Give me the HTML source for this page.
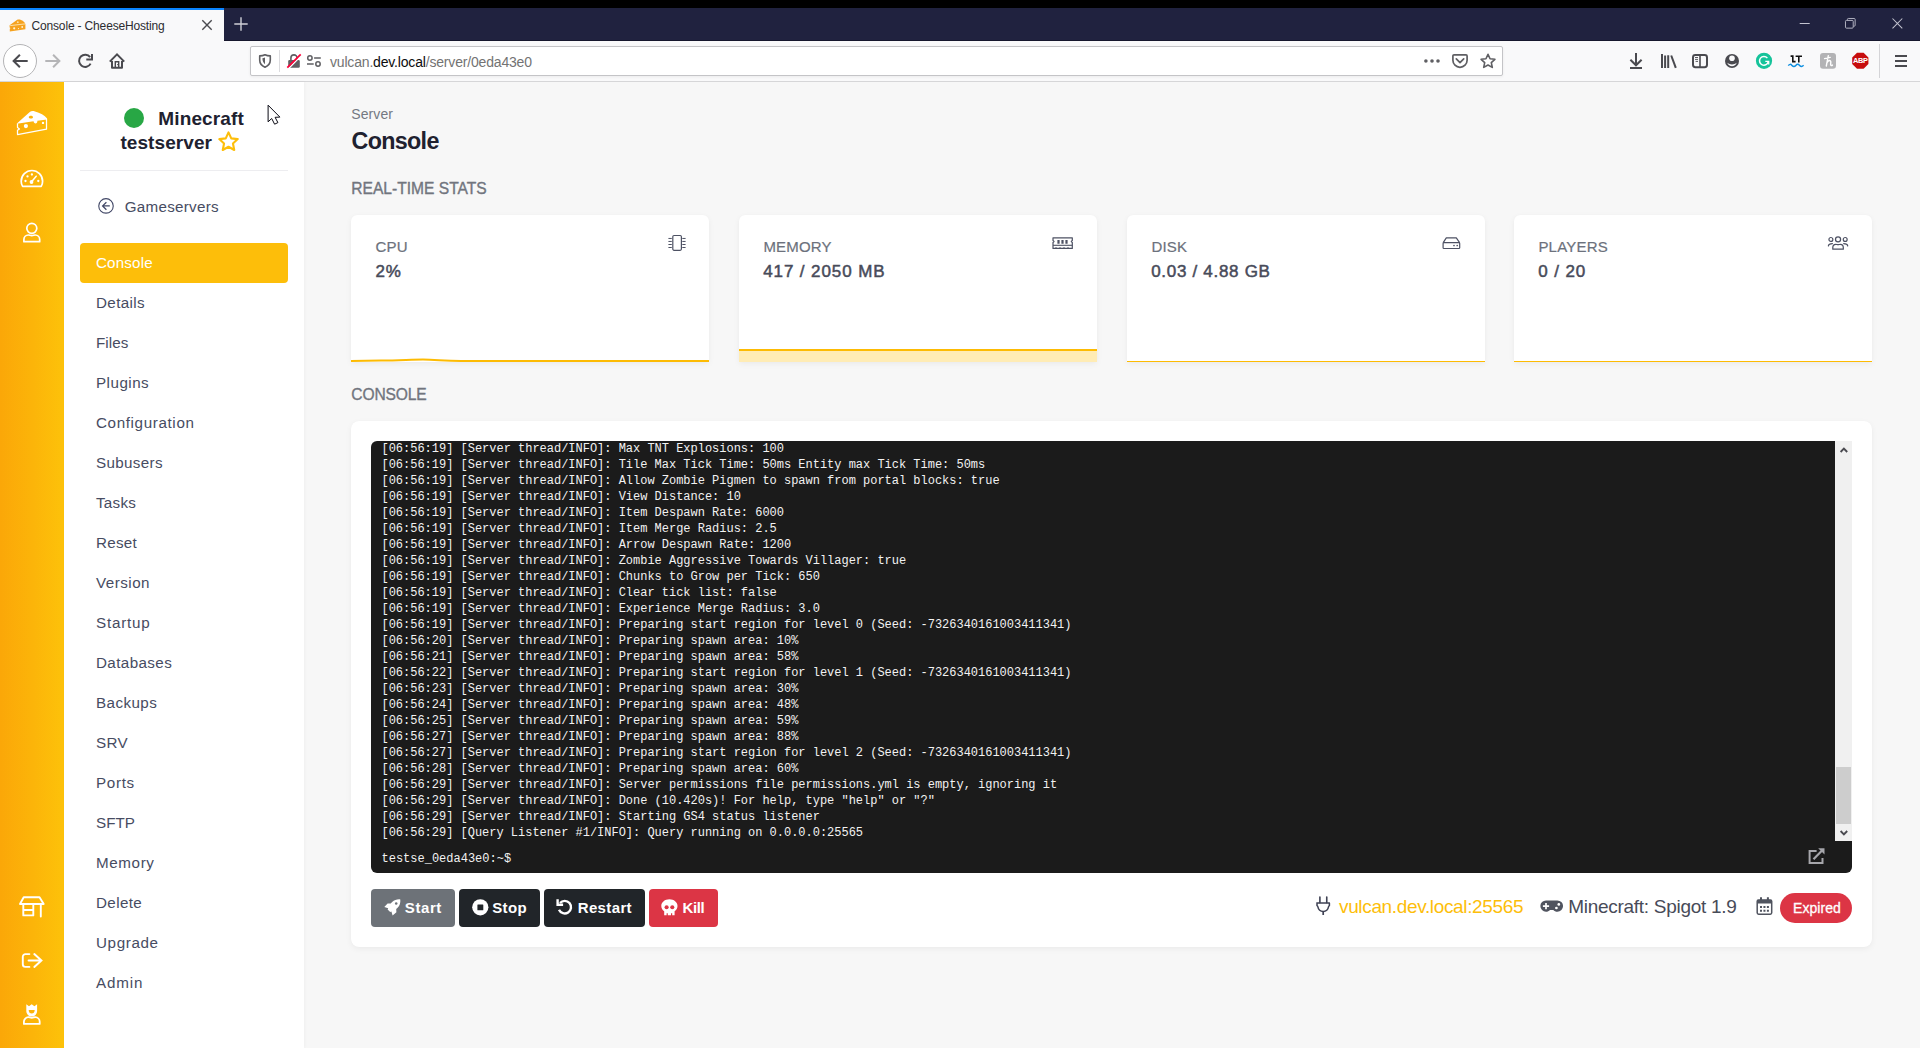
<!DOCTYPE html>
<html>
<head>
<meta charset="utf-8">
<title>Console - CheeseHosting</title>
<style>
*{box-sizing:border-box;margin:0;padding:0}
html,body{width:1920px;height:1048px;overflow:hidden;background:#f7f7f7;font-family:"Liberation Sans",sans-serif}
.abs{position:absolute}
svg{position:absolute;overflow:visible}
.t{position:absolute;white-space:pre;line-height:1}
/* browser chrome */
#topblack{left:0;top:0;width:1920px;height:8px;background:#000}
#tabbar{left:0;top:8px;width:1920px;height:33px;background:#20223f}
#tab{left:0;top:8px;width:224px;height:33px;background:#f9f9fa}
#tabline{left:0;top:8px;width:224px;height:2px;background:#0a84ff}
#navbar{left:0;top:41px;width:1920px;height:40px;background:#f9f9fa}
#navborder{left:0;top:81px;width:1920px;height:1px;background:#d6d6d8}
#urlbar{left:250px;top:46px;width:1253px;height:30px;background:#fff;border:1px solid #c4c4c7;border-radius:2px;box-shadow:0 1px 3px rgba(0,0,0,.06)}
/* app */
#orange{left:0;top:82px;width:64px;height:966px;background:linear-gradient(90deg,#fba708 0%,#fcb409 50%,#fdc20a 100%)}
#side{left:64px;top:82px;width:240px;height:966px;background:#fff;box-shadow:1px 0 3px rgba(0,0,0,.035)}
#sidediv{left:80px;top:170px;width:208px;height:1px;background:#ededf0}
#active{left:80px;top:243px;width:208px;height:40px;background:#fdbe0a;border-radius:4px}
.nav{left:96px;font-size:15.2px;color:#474c62}
.sec{font-size:15.6px;color:#71757e;-webkit-text-stroke:0.35px #71757e;letter-spacing:0px}
.card{background:#fff;border-radius:6px 6px 0 0;box-shadow:0 2px 6px rgba(0,0,0,.05),0 0 1px rgba(0,0,0,.04);overflow:hidden}
.lbl{font-size:15px;color:#6c717c;font-weight:400;-webkit-text-stroke:0.2px #6c717c;letter-spacing:0.2px}
.val{font-size:17px;color:#484b5a;font-weight:400;-webkit-text-stroke:0.5px #484b5a;letter-spacing:0.9px}
#ccard{left:351px;top:421px;width:1521px;height:526px;background:#fff;border-radius:8px;box-shadow:0 2px 6px rgba(0,0,0,.05),0 0 1px rgba(0,0,0,.04)}
#term{left:371px;top:441px;width:1481px;height:432px;background:#1b1b1b;border-radius:6px 0 6px 6px;overflow:hidden}
#lines{left:10.5px;top:-0.3px;font-family:"Liberation Mono",monospace;font-size:12px;line-height:16px;color:#f2f2f2;white-space:pre;letter-spacing:-0.014px}
#sbar{left:1464px;top:0;width:17px;height:400px;background:#f0f0f0}
#thumb{left:1465px;top:326px;width:15px;height:57px;background:#cdcdcd}
.btn{top:889px;height:38px;border-radius:4px}
.btn .t{font-size:15px;font-weight:700;color:#fff;top:11.35px}
</style>
</head>
<body>
<!-- ===== BROWSER CHROME ===== -->
<div class="abs" id="topblack"></div>
<div class="abs" id="tabbar"></div>
<div class="abs" style="left:224px;top:40px;width:1696px;height:1px;background:#16172d"></div>
<div class="abs" id="tab"></div>
<div class="abs" id="tabline"></div>
<div class="abs" id="navbar"></div>
<div class="abs" id="navborder"></div>
<div class="abs" id="urlbar"></div>
<div class="t" style="left:31.5px;top:19.5px;font-size:12px;color:#2c2c30;letter-spacing:-0.16px">Console - CheeseHosting</div>
<div class="t" style="left:330px;top:54.5px;font-size:14px;color:#737373;letter-spacing:-0.18px">vulcan.<span style="color:#0c0c0d">dev.local</span>/server/0eda43e0</div>
<!--CHROME-ICONS-START-->
<!-- favicon cheese -->
<svg style="left:8.5px;top:18.5px" width="17" height="13" viewBox="0 0 17 13"><path d="M0.6 6.2 L8.2 0.7 C9.2 0.3 10.6 0.3 12 0.9 C14.5 1.9 16.2 3.6 16.4 5.2 L16.4 10.3 L0.8 12.4 L0.8 9.8 C1.6 9.7 1.6 8.5 0.6 8.5 Z" fill="#f6a21e"/><path d="M1.2 6.6 L16 4.9" stroke="#fde9b8" stroke-width="0.9" fill="none"/><circle cx="5.2" cy="9.3" r="1.1" fill="#fff3d6"/><circle cx="8.8" cy="3.2" r="0.9" fill="#fde3a8"/><circle cx="13.2" cy="8" r="0.9" fill="#fff3d6"/><circle cx="9.5" cy="9.6" r="0.6" fill="#fff3d6"/></svg>
<!-- tab close -->
<svg style="left:201px;top:19px" width="12" height="12" viewBox="0 0 12 12"><path d="M1.3 1.3 L10.7 10.7 M10.7 1.3 L1.3 10.7" stroke="#4a4a4f" stroke-width="1.4" fill="none"/></svg>
<!-- new tab plus -->
<svg style="left:234px;top:17px" width="14" height="14" viewBox="0 0 14 14"><path d="M7 0.3 V13.7 M0.3 7 H13.7" stroke="#cfd0d8" stroke-width="1.4" fill="none"/></svg>
<!-- window controls -->
<svg style="left:1799px;top:18px" width="12" height="12" viewBox="0 0 12 12"><path d="M0.7 5.5 H10.7" stroke="#c3c4d0" stroke-width="1" fill="none"/></svg>
<svg style="left:1845.3px;top:18.3px" width="11.6" height="11.6" viewBox="0 0 12 12"><path d="M1.5 2.5 H7.5 A1 1 0 0 1 8.5 3.5 V9.5 A1 1 0 0 1 7.5 10.5 H1.5 A1 1 0 0 1 0.5 9.5 V3.5 A1 1 0 0 1 1.5 2.5 Z M2.5 2.3 V1.5 A1 1 0 0 1 3.5 0.5 H9.5 A1 1 0 0 1 10.5 1.5 V7.5 A1 1 0 0 1 9.5 8.5 H8.7" stroke="#b4b5c4" stroke-width="1" fill="none"/></svg>
<svg style="left:1891.5px;top:18.4px" width="12" height="12" viewBox="0 0 12 12"><path d="M0.5 0.5 L10.3 10.3 M10.3 0.5 L0.5 10.3" stroke="#c3c4d0" stroke-width="1.05" fill="none"/></svg>
<!-- back -->
<div class="abs" style="left:3px;top:44px;width:34px;height:34px;border-radius:50%;background:#fff;border:1px solid #b4b4b6"></div>
<svg style="left:12px;top:53px" width="16" height="16" viewBox="0 0 16 16"><path d="M15.7 8 H2 M7.9 1.7 L1.6 8 L7.9 14.3" stroke="#4a4a4f" stroke-width="2" fill="none" stroke-linejoin="miter"/></svg>
<!-- forward -->
<svg style="left:45px;top:53px" width="16" height="16" viewBox="0 0 16 16"><path d="M0.3 8 H14 M8.1 1.7 L14.4 8 L8.1 14.3" stroke="#b5b5b7" stroke-width="2" fill="none"/></svg>
<!-- reload -->
<svg style="left:76.9px;top:53px" width="16" height="16" viewBox="0 0 16 16"><path d="M13.1 4.2 A6.1 6.1 0 1 0 13.6 10.6" stroke="#4a4a4f" stroke-width="2" fill="none"/><path d="M15 0.9 V6.6 H9.3" stroke="#4a4a4f" stroke-width="2" fill="none"/></svg>
<!-- home -->
<svg style="left:109px;top:53px" width="16" height="16" viewBox="0 0 16 16"><path d="M0.8 8.6 L8 1.4 L15.2 8.6" stroke="#4a4a4f" stroke-width="2" fill="none"/><path d="M3 8 V14.7 H13 V8" stroke="#4a4a4f" stroke-width="2" fill="none" stroke-linejoin="round"/><path d="M6.3 14.5 V8.7 H9.7 V14.5" stroke="#4a4a4f" stroke-width="1.4" fill="none"/><circle cx="8.7" cy="11.6" r="0.7" fill="#4a4a4f"/></svg>
<!-- shield -->
<svg style="left:258px;top:53px" width="14" height="16" viewBox="0 0 14 16"><path d="M7 1.7 C5.4 2.5 3.5 2.9 1.7 2.9 V7 C1.7 10.4 3.8 12.9 7 14.2 C10.2 12.9 12.3 10.4 12.3 7 V2.9 C10.5 2.9 8.6 2.5 7 1.7 Z" fill="none" stroke="#5f5f63" stroke-width="1.6" stroke-linejoin="round"/><path d="M7 4.6 C6 5 5.2 5.2 4.4 5.3 C4.5 8 5.3 10 7 11.2 Z" fill="#5f5f63"/></svg>
<div class="abs" style="left:279px;top:50px;width:1px;height:22px;background:#dcdcdf"></div>
<!-- lock slashed -->
<svg style="left:286px;top:53px" width="16" height="16" viewBox="0 0 16 16"><path d="M4.9 7.5 V5 A3.1 3.1 0 0 1 11.1 5 V7.5" fill="none" stroke="#5f5f63" stroke-width="1.6"/><rect x="2.2" y="7.1" width="11.6" height="7.7" rx="1.3" fill="#5f5f63"/><path d="M15.6 2.2 L2.6 15.4" stroke="#fff" stroke-width="1.4"/><path d="M14.7 1.3 L1.3 14.6" stroke="#ff0039" stroke-width="1.7"/></svg>
<!-- permissions -->
<svg style="left:306px;top:53px" width="16" height="16" viewBox="0 0 16 16"><circle cx="3.9" cy="5" r="2.2" fill="none" stroke="#5f5f63" stroke-width="1.5"/><path d="M8.1 5 H14.8 M1 11 H7.7" stroke="#5f5f63" stroke-width="1.5"/><circle cx="12" cy="11" r="2.2" fill="none" stroke="#5f5f63" stroke-width="1.5"/></svg>
<!-- dots -->
<svg style="left:1424px;top:53px" width="16" height="16" viewBox="0 0 16 16"><circle cx="1.9" cy="8" r="1.8" fill="#5f5f63"/><circle cx="8" cy="8" r="1.8" fill="#5f5f63"/><circle cx="14" cy="8" r="1.8" fill="#5f5f63"/></svg>
<!-- pocket -->
<svg style="left:1452px;top:53px" width="16" height="16" viewBox="0 0 16 16"><path d="M2 1.9 H14 A1.1 1.1 0 0 1 15.1 3 V7.2 A7.1 7.1 0 0 1 0.9 7.2 V3 A1.1 1.1 0 0 1 2 1.9 Z" fill="none" stroke="#5f5f63" stroke-width="1.7"/><path d="M4.3 5.9 L8 9.7 L11.7 5.9" fill="none" stroke="#5f5f63" stroke-width="1.7" stroke-linecap="round" stroke-linejoin="round"/></svg>
<!-- star -->
<svg style="left:1480px;top:53px" width="16" height="16" viewBox="0 0 16 16"><path d="M8 1.3 L10.05 5.75 L14.9 6.3 L11.3 9.6 L12.3 14.4 L8 12 L3.7 14.4 L4.7 9.6 L1.1 6.3 L5.95 5.75 Z" fill="none" stroke="#5f5f63" stroke-width="1.6" stroke-linejoin="round"/></svg>
<!-- download -->
<svg style="left:1628px;top:53px" width="16" height="16" viewBox="0 0 16 16"><path d="M8 0 V12 M2.4 6.7 L8 12.3 L13.6 6.7" fill="none" stroke="#4a4a4f" stroke-width="2"/><path d="M2 15 H14" stroke="#4a4a4f" stroke-width="2"/></svg>
<!-- library -->
<svg style="left:1660px;top:53px" width="17" height="16" viewBox="0 0 17 16"><path d="M2 1 V15 M5.1 2.5 V15 M8.2 2.2 V15" stroke="#4a4a4f" stroke-width="2"/><path d="M11.2 2.5 L15.8 14.8" stroke="#4a4a4f" stroke-width="2"/></svg>
<!-- sidebar -->
<svg style="left:1692px;top:53px" width="16" height="16" viewBox="0 0 16 16"><rect x="1" y="2" width="14" height="12.2" rx="2.4" fill="none" stroke="#4a4a4f" stroke-width="2"/><path d="M8 2 V14" stroke="#4a4a4f" stroke-width="1.6"/><path d="M3 4.5 H6 M3 6.4 H6 M3.6 8.4 H6" stroke="#4a4a4f" stroke-width="0.9"/></svg>
<!-- account -->
<svg style="left:1724px;top:53px" width="16" height="16" viewBox="0 0 16 16"><circle cx="8" cy="8" r="7" fill="#4a4a4f"/><circle cx="8" cy="5.3" r="2.8" fill="#f9f9fa"/><path d="M3.3 9.8 C4.8 11.1 6.2 11.5 8 11.5 C9.8 11.5 11.2 11.1 12.7 9.8 C12 11.9 10.2 13.2 8 13.2 C5.8 13.2 4 11.9 3.3 9.8 Z" fill="#f9f9fa"/></svg>
<!-- grammarly -->
<svg style="left:1756px;top:53px" width="16" height="16" viewBox="0 0 16 16"><circle cx="8" cy="7.8" r="8.1" fill="#15c39a"/><path d="M11.4 5.1 A4.4 4.4 0 1 0 12.3 8.5" fill="none" stroke="#fff" stroke-width="1.5"/><path d="M9.3 8.4 H12.7 V11.6" fill="none" stroke="#fff" stroke-width="1.3"/></svg>
<!-- LT -->
<svg style="left:1788px;top:53px" width="16" height="16" viewBox="0 0 16 16"><path d="M2.6 3.1 H4.8 V8.6 H7.6" fill="none" stroke="#111" stroke-width="1.6"/><path d="M7.6 3.3 H14 M10.8 3.3 V9.4" fill="none" stroke="#111" stroke-width="1.6"/><path d="M0.3 12.6 C1.5 11 2.7 11 4 12.4 C5.3 13.8 6.5 13.8 7.8 12.4 C9.1 11 10.3 11 11.6 12.4 C12.9 13.8 14.1 13.8 15.6 12.3" fill="none" stroke="#0f8fe0" stroke-width="1.5"/></svg>
<!-- honey -->
<svg style="left:1820px;top:53px" width="16" height="16" viewBox="0 0 16 16"><rect x="0" y="0" width="16" height="15.8" rx="3" fill="#b3b3b5"/><path d="M8.3 2.6 L6.3 13 M4.6 5.6 L10.2 4.4 M7 9.6 C8.4 6.9 10.9 7 10.8 9.1 L10.6 11.4 C10.6 12.6 11.6 12.8 12.4 12.1" fill="none" stroke="#fff" stroke-width="1.4" stroke-linecap="round"/></svg>
<!-- ABP -->
<svg style="left:1852px;top:53px" width="17" height="16" viewBox="0 0 17 16"><path d="M5 -0.2 H11.6 L16.4 4.5 V11.1 L11.6 15.8 H5 L0.2 11.1 V4.5 Z" fill="#c70d0d"/><text x="8.3" y="10.4" font-family="Liberation Sans" font-weight="700" font-size="7.4" fill="#fff" text-anchor="middle" letter-spacing="-0.3">ABP</text></svg>
<div class="abs" style="left:1879px;top:44px;width:1px;height:34px;background:#d4d4d7"></div>
<!-- hamburger -->
<svg style="left:1895px;top:53px" width="12" height="16" viewBox="0 0 12 16"><path d="M0 3 H12 M0 8 H12 M0 13 H12" stroke="#4a4a4f" stroke-width="2"/></svg>
<!--CHROME-ICONS-END-->

<!-- ===== APP ===== -->
<div class="abs" id="orange"></div>
<div class="abs" id="side"></div>
<!--ORANGE-ICONS-START-->
<!-- cheese -->
<svg style="left:16px;top:110px" width="32" height="26" viewBox="0 0 32 26"><path fill-rule="evenodd" d="M0.9 13.5 L13.8 1.9 C14.8 1 17 0.9 19 1.4 C24 2.6 28.7 5.3 31.1 8.4 L31.1 9.4 L21.4 10.8 C21.4 12.5 20.7 13.5 19.6 13.5 C18.5 13.5 17.7 12.6 17.6 11.3 L0.9 13.8 Z M14.9 5.7 C13.7 5.7 12.8 6.3 12.8 7.15 C12.8 8 13.7 8.6 14.9 8.6 C16.1 8.6 17 8 17 7.15 C17 6.3 16.1 5.7 14.9 5.7 Z" fill="#fff"/><path d="M1.5 13.4 V17.6 L3.5 18.95 L1.5 20.3 V24.6 L30.5 19.2 V9" fill="none" stroke="#fff" stroke-width="1.25" stroke-linejoin="round"/><circle cx="9.9" cy="16.1" r="2.1" fill="#fff"/><circle cx="27" cy="12.9" r="1.2" fill="#fff"/></svg>
<!-- gauge -->
<svg style="left:20px;top:169px" width="24" height="19" viewBox="0 0 24 19"><path d="M2.6 17.4 C1.6 15.8 1.2 14 1.2 12.2 C1.2 6.2 6 1.5 11.9 1.5 C17.8 1.5 22.6 6.2 22.6 12.2 C22.6 14 22.2 15.8 21.2 17.4 Z" fill="none" stroke="#fff" stroke-width="1.7" stroke-linejoin="round"/><circle cx="5.5" cy="12" r="1.15" fill="#fff"/><circle cx="7.5" cy="7.4" r="1.15" fill="#fff"/><circle cx="11.9" cy="5.5" r="1.15" fill="#fff"/><circle cx="18.3" cy="12" r="1.15" fill="#fff"/><path d="M11.6 12.8 L16.2 7.2" stroke="#fff" stroke-width="1.5" stroke-linecap="round"/><circle cx="11.5" cy="13" r="1.9" fill="#fff"/></svg>
<!-- user -->
<svg style="left:22px;top:222px" width="20" height="22" viewBox="0 0 20 22"><circle cx="9.8" cy="6.3" r="5" fill="none" stroke="#fff" stroke-width="1.7"/><path d="M1.9 19.7 V17.5 C1.9 14.9 3.9 13 6.4 13 C7.6 13 8.2 13.6 9.8 13.6 C11.4 13.6 12 13 13.2 13 C15.7 13 17.7 14.9 17.7 17.5 V19.7 Z" fill="none" stroke="#fff" stroke-width="1.7" stroke-linejoin="round"/></svg>
<!-- store -->
<svg style="left:19px;top:895px" width="26" height="23" viewBox="0 0 26 23"><path d="M4.7 2.2 H20.5 L24.7 9 H1 Z" fill="none" stroke="#fff" stroke-width="1.9" stroke-linejoin="round"/><path d="M4.3 9 V20.4 H14.3 V9 M4.3 15 H14.3" fill="none" stroke="#fff" stroke-width="1.9" stroke-linejoin="round"/><path d="M21.8 9 V21.6" stroke="#fff" stroke-width="1.9" stroke-linecap="round"/></svg>
<!-- logout -->
<svg style="left:21px;top:952px" width="22" height="17" viewBox="0 0 22 17"><path d="M8.4 2.1 H4.4 A2.6 2.6 0 0 0 1.8 4.7 V12.3 A2.6 2.6 0 0 0 4.4 14.9 H8.4" fill="none" stroke="#fff" stroke-width="1.9" stroke-linecap="round"/><path d="M7.6 8.5 H19.6 M13.3 2.1 L20.4 8.5 L13.3 14.9" fill="none" stroke="#fff" stroke-width="2" stroke-linecap="round" stroke-linejoin="miter"/></svg>
<!-- admin -->
<svg style="left:22px;top:1003px" width="20" height="23" viewBox="0 0 20 23"><path d="M4.3 1.2 L7 3.3 L9.7 1.2 L12.4 3.3 L15.1 1.2 V8.2 A5.4 5.4 0 0 1 4.3 8.2 Z" fill="#fff"/><path d="M6.7 6.9 H12.7 C12.7 9.2 11.4 10.5 9.7 10.5 C8 10.5 6.7 9.2 6.7 6.9 Z" fill="#fcb509"/><path d="M1.9 20.9 V18.8 C1.9 16.2 3.9 14.2 6.4 14.2 C7.6 14.2 8.2 14.8 9.8 14.8 C11.4 14.8 12 14.2 13.2 14.2 C15.7 14.2 17.7 16.2 17.7 18.8 V20.9 Z" fill="none" stroke="#fff" stroke-width="1.8" stroke-linejoin="round"/></svg>
<!--ORANGE-ICONS-END-->

<!-- sidebar header -->
<div class="abs" style="left:124px;top:107.5px;width:20px;height:20px;border-radius:50%;background:#28a745"></div>
<div class="t" style="left:158.3px;top:108.95px;font-size:19px;font-weight:700;color:#20212f;letter-spacing:0.13px">Minecraft</div>
<div class="t" style="left:120.4px;top:133.05px;font-size:19px;font-weight:700;color:#20212f;letter-spacing:0.08px">testserver</div>
<div class="abs" id="sidediv"></div>
<div class="t nav" style="left:124.8px;top:198.8px;letter-spacing:0.26px">Gameservers</div>
<div class="abs" id="active"></div>
<!--SIDE-ICONS-START-->
<!-- star -->
<svg style="left:217px;top:130px" width="23" height="23" viewBox="0 0 23 23"><path d="M11.5 2.4 L14.25 8.35 L20.75 9.1 L15.95 13.55 L17.25 20 L11.5 16.75 L5.75 20 L7.05 13.55 L2.25 9.1 L8.75 8.35 Z" fill="none" stroke="#fdbe0a" stroke-width="2.1" stroke-linejoin="round"/></svg>
<!-- arrow circle left -->
<svg style="left:98px;top:198px" width="16" height="16" viewBox="0 0 16 16"><circle cx="8" cy="7.9" r="7.25" fill="none" stroke="#414766" stroke-width="1.1"/><path d="M11.8 7.9 H4.8 M8.4 4.2 L4.6 7.9 L8.4 11.7" fill="none" stroke="#414766" stroke-width="1.25"/></svg>
<!--SIDE-ICONS-END-->
<div class="t nav" style="top:255.3px;color:#fff;letter-spacing:0.15px">Console</div>
<div class="t nav" style="top:295.3px;letter-spacing:0.37px">Details</div>
<div class="t nav" style="top:335.3px;letter-spacing:0.06px">Files</div>
<div class="t nav" style="top:375.3px;letter-spacing:0.48px">Plugins</div>
<div class="t nav" style="top:415.3px;letter-spacing:0.63px">Configuration</div>
<div class="t nav" style="top:455.3px;letter-spacing:0.33px">Subusers</div>
<div class="t nav" style="top:495.3px;letter-spacing:0.27px">Tasks</div>
<div class="t nav" style="top:535.3px;letter-spacing:0.26px">Reset</div>
<div class="t nav" style="top:575.3px;letter-spacing:0.48px">Version</div>
<div class="t nav" style="top:615.3px;letter-spacing:0.78px">Startup</div>
<div class="t nav" style="top:655.3px;letter-spacing:0.39px">Databases</div>
<div class="t nav" style="top:695.3px;letter-spacing:0.43px">Backups</div>
<div class="t nav" style="top:735.3px;letter-spacing:0.31px">SRV</div>
<div class="t nav" style="top:775.3px;letter-spacing:0.67px">Ports</div>
<div class="t nav" style="top:815.3px;letter-spacing:0px">SFTP</div>
<div class="t nav" style="top:855.3px;letter-spacing:0.62px">Memory</div>
<div class="t nav" style="top:895.3px;letter-spacing:0.37px">Delete</div>
<div class="t nav" style="top:935.3px;letter-spacing:0.62px">Upgrade</div>
<div class="t nav" style="top:975.3px;letter-spacing:0.85px">Admin</div>

<!-- main header -->
<div class="t" style="left:351.3px;top:107.4px;font-size:14px;color:#747982;letter-spacing:0.08px">Server</div>
<div class="t" style="left:351.5px;top:130.1px;font-size:23.3px;font-weight:700;color:#20212f;letter-spacing:-0.67px">Console</div>
<div class="t sec" style="left:351.3px;top:181px">REAL-TIME STATS</div>

<!-- stat cards -->
<div class="abs card" id="c1" style="left:351px;top:215px;width:358px;height:147px">
  <div class="t lbl" style="left:24.4px;top:24px">CPU</div>
  <div class="t val" style="left:24.4px;top:47.9px">2%</div>
  <svg style="left:0;top:0" width="358" height="147"><path d="M0 146 L30 145.6 C50 145.3 62 144.6 72 144.6 C84 144.6 92 145.7 110 145.9 L358 146" fill="none" stroke="#fdbb03" stroke-width="2"/></svg>
</div>
<div class="abs card" id="c2" style="left:739px;top:215px;width:358px;height:147px">
  <div class="t lbl" style="left:24.4px;top:24px">MEMORY</div>
  <div class="t val" style="left:24.2px;top:47.9px">417 / 2050 MB</div>
  <div class="abs" style="left:0;top:134px;width:358px;height:13px;background:#ffecb5;border-top:2px solid #fdbb03"></div>
</div>
<div class="abs card" id="c3" style="left:1127px;top:215px;width:358px;height:147px">
  <div class="t lbl" style="left:24.4px;top:24px">DISK</div>
  <div class="t val" style="left:24.2px;top:47.9px;letter-spacing:0.7px">0.03 / 4.88 GB</div>
  <div class="abs" style="left:0;top:145.6px;width:358px;height:1.4px;background:#fdbb03"></div>
</div>
<div class="abs card" id="c4" style="left:1514px;top:215px;width:358px;height:147px">
  <div class="t lbl" style="left:24.4px;top:24px">PLAYERS</div>
  <div class="t val" style="left:24.2px;top:47.9px">0 / 20</div>
  <div class="abs" style="left:0;top:146px;width:358px;height:1px;background:#fdbb03"></div>
</div>
<!--CARD-ICONS-START-->
<!-- cpu -->
<svg style="left:668px;top:234px" width="18" height="18" viewBox="0 0 18 18"><rect x="4.8" y="1.5" width="8.6" height="14.8" rx="1.2" fill="none" stroke="#4d5163" stroke-width="1.2"/><path d="M0.8 4.45 H3.4 M0.8 7.45 H3.4 M0.8 10.5 H3.4 M0.8 13.5 H3.4 M14.7 4.45 H17.2 M14.7 7.45 H17.2 M14.7 10.5 H17.2 M14.7 13.5 H17.2" stroke="#4d5163" stroke-width="1" stroke-linecap="round"/></svg>
<!-- memory -->
<svg style="left:1052px;top:236px" width="22" height="14" viewBox="0 0 22 14"><path d="M1 1.8 H20.3 V4.5 L19.3 5.5 L20.3 6.5 V12.4 H1 V6.5 L2 5.5 L1 4.5 Z" fill="none" stroke="#4d5163" stroke-width="1.2" stroke-linejoin="round"/><path d="M6.5 4 V7.8 M10.5 4 V7.8 M14.5 4 V7.8" stroke="#4d5163" stroke-width="2.2"/><path d="M1 9.3 H20.3" stroke="#4d5163" stroke-width="1.1"/><path d="M4 11 V12.4 M8 11 V12.4 M12 11 V12.4 M16 11 V12.4" stroke="#4d5163" stroke-width="0.9"/></svg>
<!-- disk -->
<svg style="left:1442px;top:236px" width="19" height="14" viewBox="0 0 19 14"><path d="M1.2 6.6 L4.3 1.9 H14.3 L17.6 6.6" fill="none" stroke="#4d5163" stroke-width="1.2" stroke-linejoin="round"/><rect x="1.1" y="6.6" width="16.6" height="5.9" rx="0.8" fill="none" stroke="#4d5163" stroke-width="1.2"/><circle cx="12" cy="9.5" r="0.85" fill="#4d5163"/><circle cx="15.2" cy="9.5" r="0.85" fill="#4d5163"/></svg>
<!-- users -->
<svg style="left:1827px;top:235px" width="22" height="16" viewBox="0 0 22 16"><circle cx="11.05" cy="4.3" r="2.55" fill="none" stroke="#4d5163" stroke-width="1.25"/><circle cx="3.9" cy="4.45" r="1.95" fill="none" stroke="#4d5163" stroke-width="1.2"/><circle cx="18.2" cy="4.45" r="1.95" fill="none" stroke="#4d5163" stroke-width="1.2"/><path d="M5.8 14.2 V12.6 C5.8 10.6 7.2 9.3 8.8 9.3 C9.6 9.3 10 9.7 11.05 9.7 C12.1 9.7 12.5 9.3 13.3 9.3 C14.9 9.3 16.3 10.6 16.3 12.6 V14.2 Z" fill="none" stroke="#4d5163" stroke-width="1.25" stroke-linejoin="round"/><path d="M1.4 10.8 C1.6 9.4 2.9 8.5 5.4 8.5 M20.7 10.8 C20.5 9.4 19.2 8.5 16.7 8.5" fill="none" stroke="#4d5163" stroke-width="1.25" stroke-linecap="round"/></svg>
<!--CARD-ICONS-END-->

<div class="t sec" style="left:351.3px;top:386.6px;letter-spacing:-0.15px">CONSOLE</div>

<!-- console card -->
<div class="abs" id="ccard"></div>
<div class="abs" id="term">
<div class="abs" id="lines">[06:56:19] [Server thread/INFO]: Max TNT Explosions: 100
[06:56:19] [Server thread/INFO]: Tile Max Tick Time: 50ms Entity max Tick Time: 50ms
[06:56:19] [Server thread/INFO]: Allow Zombie Pigmen to spawn from portal blocks: true
[06:56:19] [Server thread/INFO]: View Distance: 10
[06:56:19] [Server thread/INFO]: Item Despawn Rate: 6000
[06:56:19] [Server thread/INFO]: Item Merge Radius: 2.5
[06:56:19] [Server thread/INFO]: Arrow Despawn Rate: 1200
[06:56:19] [Server thread/INFO]: Zombie Aggressive Towards Villager: true
[06:56:19] [Server thread/INFO]: Chunks to Grow per Tick: 650
[06:56:19] [Server thread/INFO]: Clear tick list: false
[06:56:19] [Server thread/INFO]: Experience Merge Radius: 3.0
[06:56:19] [Server thread/INFO]: Preparing start region for level 0 (Seed: -7326340161003411341)
[06:56:20] [Server thread/INFO]: Preparing spawn area: 10%
[06:56:21] [Server thread/INFO]: Preparing spawn area: 58%
[06:56:22] [Server thread/INFO]: Preparing start region for level 1 (Seed: -7326340161003411341)
[06:56:23] [Server thread/INFO]: Preparing spawn area: 30%
[06:56:24] [Server thread/INFO]: Preparing spawn area: 48%
[06:56:25] [Server thread/INFO]: Preparing spawn area: 59%
[06:56:27] [Server thread/INFO]: Preparing spawn area: 88%
[06:56:27] [Server thread/INFO]: Preparing start region for level 2 (Seed: -7326340161003411341)
[06:56:28] [Server thread/INFO]: Preparing spawn area: 60%
[06:56:29] [Server thread/INFO]: Server permissions file permissions.yml is empty, ignoring it
[06:56:29] [Server thread/INFO]: Done (10.420s)! For help, type "help" or "?"
[06:56:29] [Server thread/INFO]: Starting GS4 status listener
[06:56:29] [Query Listener #1/INFO]: Query running on 0.0.0.0:25565</div>
<div class="abs" id="lines2" style="left:10.5px;top:410px;font-family:'Liberation Mono',monospace;font-size:12px;line-height:16px;color:#f2f2f2;white-space:pre">testse_0eda43e0:~$</div>
<div class="abs" id="sbar"></div>
<div class="abs" id="thumb"></div>
<!--TERM-ICONS-START-->
<!-- scroll arrows -->
<svg style="left:1468px;top:5px" width="10" height="8" viewBox="0 0 10 8"><path d="M1.6 6 L4.9 2.7 L8.2 6" fill="none" stroke="#4a4a50" stroke-width="1.9"/></svg>
<svg style="left:1468px;top:388px" width="10" height="8" viewBox="0 0 10 8"><path d="M1.6 2 L4.9 5.3 L8.2 2" fill="none" stroke="#4a4a50" stroke-width="1.9"/></svg>
<!-- popout -->
<svg style="left:1437px;top:406px" width="18" height="18" viewBox="0 0 18 18"><path d="M8.6 3.9 H1.6 V15.9 H14.5 V11" fill="none" stroke="#a6a6ab" stroke-width="2"/><path d="M5.5 12.2 L14.8 2.8" stroke="#a6a6ab" stroke-width="2.2"/><path d="M10.2 1.3 H16.5 V7.6 Z" fill="#a6a6ab"/></svg>
<!--TERM-ICONS-END-->
</div>

<!-- buttons -->
<div class="abs btn" style="left:371px;width:84px;background:#6d7278"><div class="t" style="left:33.8px;letter-spacing:0.58px">Start</div></div>
<div class="abs btn" style="left:459px;width:81px;background:#212529"><div class="t" style="left:33.3px;letter-spacing:0.32px">Stop</div></div>
<div class="abs btn" style="left:544px;width:101px;background:#212529"><div class="t" style="left:33.7px;letter-spacing:0.37px">Restart</div></div>
<div class="abs btn" style="left:649px;width:69px;background:#dc3545"><div class="t" style="left:33.5px;letter-spacing:-0.36px">Kill</div></div>
<!--BTN-ICONS-START-->
<!-- rocket -->
<svg style="left:383.5px;top:898.5px" width="17" height="17" viewBox="0 0 17 17"><path d="M16.3 0.4 C16.6 3.4 15.9 6.3 13.6 8.8 L12.2 10.1 L12.4 13.2 L8.6 16.6 L7.4 12.4 L6.2 13 L3.6 10.4 L4.2 9.2 L0.3 8 L3.6 4.4 L6.7 4.5 L8.1 3.1 C10.5 0.8 13.3 0.1 16.3 0.4 Z" fill="#fff"/><circle cx="12.2" cy="4.5" r="1.25" fill="#6d7278"/></svg>
<!-- stop -->
<svg style="left:471.5px;top:898.7px" width="17" height="17" viewBox="0 0 17 17"><circle cx="8.3" cy="8.3" r="8.1" fill="#fff"/><rect x="5.4" y="5.5" width="5.9" height="5.7" rx="0.5" fill="#212529"/></svg>
<!-- restart -->
<svg style="left:556px;top:898.7px" width="18" height="17" viewBox="0 0 18 17"><path d="M4 4 A6.3 6.3 0 1 1 3 10.8" fill="none" stroke="#fff" stroke-width="2.4"/><path d="M0.4 0.3 H2.8 V4.6 H7.1 V7 H0.4 Z" fill="#fff"/></svg>
<!-- skull -->
<svg style="left:661px;top:898.7px" width="17" height="17" viewBox="0 0 17 17"><path d="M8.4 0.3 C12.9 0.3 16.5 3.2 16.5 7 C16.5 9.2 15.4 11 13.6 12.2 V16.3 H11.2 V14.3 H10 V16.3 H6.8 V14.3 H5.6 V16.3 H3.2 V12.2 C1.4 11 0.3 9.2 0.3 7 C0.3 3.2 3.9 0.3 8.4 0.3 Z" fill="#fff"/><circle cx="5.6" cy="8.2" r="2.05" fill="#dc3545"/><circle cx="11.3" cy="8.2" r="2.05" fill="#dc3545"/></svg>
<!--BTN-ICONS-END-->

<!-- right info -->
<div class="t" style="left:1339px;top:896.5px;font-size:19px;color:#fdbe0a;letter-spacing:-0.35px">vulcan.dev.local:25565</div>
<div class="t" style="left:1568.3px;top:896.5px;font-size:19px;color:#484b58;letter-spacing:-0.29px">Minecraft: Spigot 1.9</div>
<div class="abs" style="left:1780px;top:893px;width:72px;height:30px;border-radius:15px;background:#dc3545"></div>
<div class="t" style="left:1793px;top:900.5px;font-size:14px;font-weight:400;color:#fff;-webkit-text-stroke:0.3px #fff;letter-spacing:0.05px">Expired</div>
<!--INFO-ICONS-START-->
<!-- plug -->
<svg style="left:1315px;top:896px" width="16" height="20" viewBox="0 0 16 20"><path d="M4.9 1.1 V6.6 M11.75 1.1 V6.6" stroke="#3f4254" stroke-width="1.6" stroke-linecap="round"/><path d="M1.3 6.9 H14.9 M2 6.9 V9.6 C2.6 9.9 2.8 10.3 2.9 10.9 C3.4 13.6 5.4 15.4 8.2 15.4 C11 15.4 13 13.6 13.5 10.9 C13.6 10.3 13.8 9.9 14.4 9.6 V6.9" fill="none" stroke="#3f4254" stroke-width="1.5" stroke-linejoin="round"/><path d="M8.2 15.4 V19" stroke="#3f4254" stroke-width="1.7"/></svg>
<!-- gamepad -->
<svg style="left:1540px;top:900px" width="23" height="12" viewBox="0 0 23 12"><path d="M6 0.4 H17.4 A5.6 5.6 0 0 1 17.4 11.7 C15.7 11.7 14.3 11 13.3 9.9 H10 C9 11 7.6 11.7 6 11.7 A5.65 5.65 0 0 1 6 0.4 Z" fill="#50545f"/><path d="M2.9 6.1 H9.1 M6 3 V9.2" stroke="#fff" stroke-width="1.7"/><circle cx="18.8" cy="4.4" r="1.35" fill="#fff"/><circle cx="16.4" cy="8" r="1.35" fill="#fff"/></svg>
<!-- calendar -->
<svg style="left:1756px;top:897px" width="17" height="18" viewBox="0 0 17 18"><rect x="1.2" y="2.9" width="14.5" height="14.3" rx="1.4" fill="none" stroke="#50545f" stroke-width="1.5"/><rect x="1.2" y="2.9" width="14.5" height="3.6" fill="#50545f"/><path d="M5 0.3 V3 M11.9 0.3 V3" stroke="#50545f" stroke-width="2"/><path d="M4 9 H6 V11 H4 Z M7.45 9 H9.45 V11 H7.45 Z M10.9 9 H12.9 V11 H10.9 Z M4 12.7 H6 V14.7 H4 Z M7.45 12.7 H9.45 V14.7 H7.45 Z M10.9 12.7 H12.9 V14.7 H10.9 Z" fill="#50545f"/></svg>
<!--INFO-ICONS-END-->

<!--CURSOR-START-->
<svg style="left:267px;top:104px" width="14" height="21" viewBox="0 0 14 21"><path d="M1.1 1.2 V17.8 L4.7 14.5 L7.6 20.2 L10.9 18.6 L8.1 13.3 L12.9 13.1 Z" fill="#fff" stroke="#0a0a14" stroke-width="1" stroke-linejoin="miter"/></svg>
<!--CURSOR-END-->
</body>
</html>
